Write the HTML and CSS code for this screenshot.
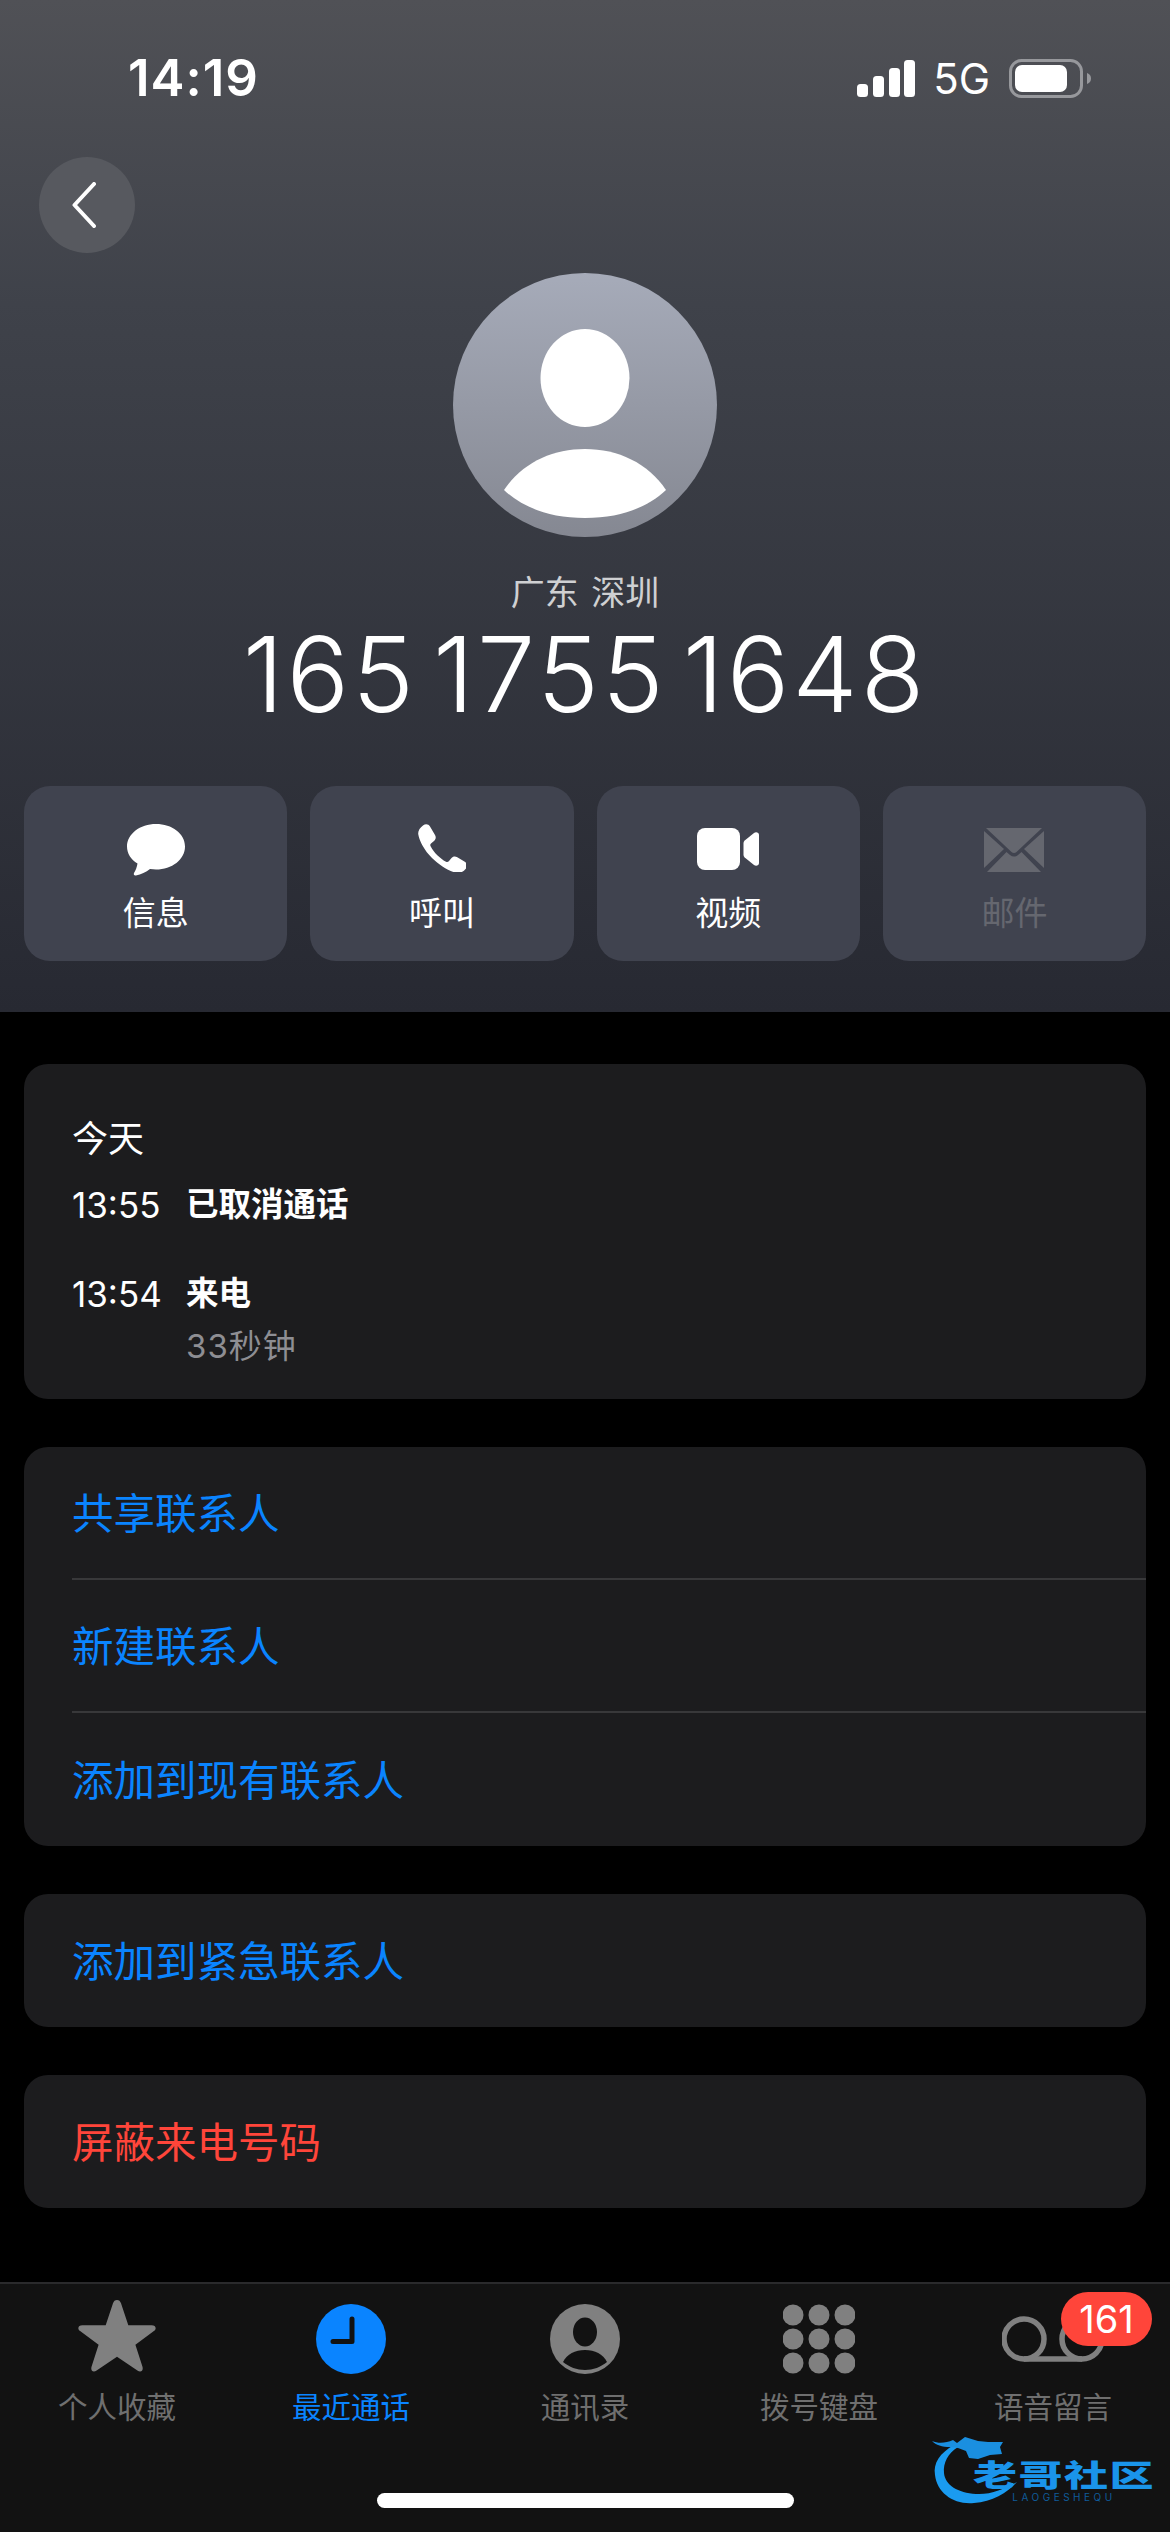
FILE: index.html
```html
<!DOCTYPE html>
<html lang="zh-CN">
<head>
    <meta charset="UTF-8">
    <meta name="viewport" content="width=device-width, initial-scale=1.0">
    <title>最近通话</title>
    <link rel="stylesheet" href="styles.css">
</head>
<body>

<div class="tela">

    <header class="topo">
        <div class="status">
            <span class="hora">14:19</span>
            <div class="status-dir">
                <svg class="sinal" width="58" height="37" viewBox="0 0 58 37" fill="#fff">
                    <rect x="0" y="24" width="11" height="13" rx="3.500"/>
                    <rect x="16" y="16" width="11" height="21" rx="3.500"/>
                    <rect x="32" y="8" width="11" height="29" rx="3.500"/>
                    <rect x="47" y="0" width="11" height="37" rx="3.500"/>
                </svg>
                <span class="rede">5G</span>
                <svg class="bateria" width="82" height="39" viewBox="0 0 82 39">
                    <rect x="1.500" y="1.500" width="71" height="36" rx="11" fill="none" stroke="#97989c" stroke-width="3"/>
                    <rect x="6" y="6" width="52" height="27" rx="7" fill="#fff"/>
                    <path d="M78 14c3 1 4 3 4 5.500s-1 4.500-4 5.500z" fill="#97989c"/>
                </svg>
            </div>
        </div>

        <button class="voltar">
            <svg width="24" height="46" viewBox="0 0 24 46"><path d="M22 2 2.500 23 22 44" fill="none" stroke="#fff" stroke-width="4" stroke-linecap="round" stroke-linejoin="round"/></svg>
        </button>

        <div class="avatar">
            <svg width="264" height="264" viewBox="0 0 264 264">
                <ellipse cx="132" cy="105" rx="44.500" ry="49" fill="#fff"/>
                <path d="M51 217C69 190 99 176 132 176s63 14 81 41c-18 17-45 28-81 28s-63-11-81-28z" fill="#fff"/>
            </svg>
        </div>

        <div class="local">广东 深圳</div>
        <div class="numero">165 1755 1648</div>

        <div class="acoes">
            <div class="acao">
                <svg class="ic-msg" width="58" height="52" viewBox="0 0 58 52"><path d="M29 0C13 0 0 10 0 22.500c0 7 4 13 10.500 17-.5 3.500-2 7-3.500 9.500-.7 1.500.3 3 2 2.500 5-1 10-3.500 14-6.500 2 .3 4 .5 6 .5 16 0 29-10 29-23S45 0 29 0z" fill="#fff"/></svg>
                <span>信息</span>
            </div>
            <div class="acao">
                <svg class="ic-fone" width="48" height="48" viewBox="0 0 48 48"><path d="M5 1.500C7.500-.5 10.500 0 12 2.500l5 8.500c1.300 2.300.8 4.500-1 6l-3 2.400c-.8.700-1 1.700-.4 2.800 1.800 3.300 4 6.300 6.700 9 2.700 2.600 5.500 4.800 8.700 6.500 1 .6 2 .4 2.800-.4l2.500-3c1.500-1.800 3.700-2.300 6-1l7.500 4.400c2.500 1.500 3 4.600 1 7-2.500 3-5.800 4.800-9.300 4.300C31 47 21.500 41.500 14 34 6.500 26.500 1.500 17.500.3 10.500-.3 7 1.800 4 5 1.500z" fill="#fff"/></svg>
                <span>呼叫</span>
            </div>
            <div class="acao">
                <svg class="ic-video" width="62" height="42" viewBox="0 0 62 42"><rect x="0" y="0" width="43" height="42" rx="8" fill="#fff"/><path d="M46.500 15c0-1 .4-1.800 1.200-2.500L57 5c2-1.500 5-.5 5 2v28c0 2.500-3 3.500-5 2l-9.300-7.500c-.8-.7-1.200-1.500-1.200-2.500z" fill="#fff"/></svg>
                <span>视频</span>
            </div>
            <div class="acao desativado">
                <svg class="ic-mail" width="60" height="44" viewBox="0 0 60 44" fill="#65676f">
                    <path d="M2 0h56L32.500 24c-1.500 1.300-3.500 1.300-5 0z"/>
                    <path d="M0 3v37l20-19z"/>
                    <path d="M60 3v37L40 21z"/>
                    <path d="M3 44h54L37.500 24l-3.500 3c-2.500 2-5.500 2-8 0l-3.500-3z"/>
                </svg>
                <span>邮件</span>
            </div>
        </div>
    </header>

    <main class="conteudo">
        <section class="card historico">
            <div class="dia">今天</div>
            <div class="chamada">
                <span class="chamada-hora">13:55</span>
                <div class="chamada-info"><b>已取消通话</b></div>
            </div>
            <div class="chamada">
                <span class="chamada-hora">13:54</span>
                <div class="chamada-info">
                    <b>来电</b>
                    <small>33秒钟</small>
                </div>
            </div>
        </section>

        <section class="card">
            <div class="linha">共享联系人</div>
            <div class="linha">新建联系人</div>
            <div class="linha">添加到现有联系人</div>
        </section>

        <section class="card">
            <div class="linha">添加到紧急联系人</div>
        </section>

        <section class="card">
            <div class="linha perigo">屏蔽来电号码</div>
        </section>
    </main>

    <nav class="abas">
        <div class="aba">
            <svg width="78" height="74" viewBox="0 0 78 74"><path d="M39 0c2 0 3.300 1.200 4 3.300l7.300 22h23.300c4.200 0 5.400 3.400 2.300 5.700L57.400 44.800l7 21.800c1.300 4-1.600 6.200-5 3.800L39 56.700 18.600 70.400c-3.400 2.400-6.300.2-5-3.800l7-21.800L2.100 31C-1 28.700.2 25.300 4.400 25.300h23.300l7.300-22C35.700 1.200 37 0 39 0z" fill="#808080"/></svg>
            <span>个人收藏</span>
        </div>
        <div class="aba ativa">
            <svg width="70" height="70" viewBox="0 0 70 70"><circle cx="35" cy="35" r="35" fill="#0a84ff"/><path d="M36 15v22.500H17" fill="none" stroke="#121212" stroke-width="5" stroke-linecap="round" stroke-linejoin="round"/></svg>
            <span>最近通话</span>
        </div>
        <div class="aba">
            <svg width="70" height="70" viewBox="0 0 70 70"><circle cx="35" cy="35" r="35" fill="#808080"/><ellipse cx="35" cy="28" rx="12" ry="14.500" fill="#121212"/><path d="M13 58c4-8 12-12 22-12s18 4 22 12c-6 5-14 8-22 8s-16-3-22-8z" fill="#121212"/></svg>
            <span>通讯录</span>
        </div>
        <div class="aba">
            <svg width="72" height="70" viewBox="0 0 72 70" fill="#808080">
                <circle cx="10" cy="11" r="10.500"/><circle cx="36" cy="11" r="10.500"/><circle cx="62" cy="11" r="10.500"/>
                <circle cx="10" cy="35" r="10.500"/><circle cx="36" cy="35" r="10.500"/><circle cx="62" cy="35" r="10.500"/>
                <circle cx="10" cy="59" r="10.500"/><circle cx="36" cy="59" r="10.500"/><circle cx="62" cy="59" r="10.500"/>
            </svg>
            <span>拨号键盘</span>
        </div>
        <div class="aba">
            <svg class="correio" width="102" height="46" viewBox="0 0 102 46"><path d="M22 43h58" fill="none" stroke="#808080" stroke-width="5.500"/><circle cx="22" cy="23" r="20" fill="none" stroke="#808080" stroke-width="5.500"/><circle cx="80" cy="23" r="20" fill="none" stroke="#808080" stroke-width="5.500"/></svg>
            <span>语音留言</span>
            <div class="badge">161</div>
        </div>
    </nav>

    <div class="marca">
        <svg class="marca-dragao" width="90" height="70" viewBox="0 0 90 70">
            <path d="M22 10C8 18 1 28 3 40c2 18 19 30 39 28 18-1 33-10 43-21-13 7-27 13-41 12C26 58 13 50 12 38c-1-10 4-20 14-26z" fill="#1a9bf0"/>
            <path d="M0 6c7 3 14 2 21-1l4 3 8-6 13 4 10 1h15l-3 5 2 7-12 1-12 4-9-1-3-7-8-3-8-1C10 12 4 10 0 6z" fill="#1a8fe0"/>
        </svg>
        <div class="marca-texto">
            <strong>老哥社区</strong>
            <small>LAOGESHEQU</small>
        </div>
    </div>

    <div class="home"></div>
</div>

</body>
</html>
```
FILE: styles.css
```css
* {
    box-sizing: border-box;
}
body {
    margin: 0;
    background-color: #000;
    color: #fff;
    font-family: Inter, "Noto Sans CJK SC", sans-serif;
}
.tela {
    position: relative;
    width: 1170px;
    height: 2532px;
    overflow: hidden;
    display: flex;
    flex-direction: column;
}
.topo {
    height: 1012px;
    padding: 0 24px;
    display: flex;
    flex-direction: column;
    background: linear-gradient(180deg, #505156 0%, #3f424a 30%, #272932 100%);
}
.status {
    height: 157px;
    display: flex;
    justify-content: space-between;
    align-items: flex-start;
    padding: 50px 55px 0 104px;
}
.hora {
    font-size: 51px;
    font-weight: 600;
    line-height: 56px;
    letter-spacing: 1px;
}
.status-dir {
    display: flex;
    align-items: center;
    padding-top: 9px;
}
.rede {
    font-size: 42px;
    line-height: 37px;
    margin: 0 19px 0 18px;
}
.voltar {
    width: 96px;
    height: 96px;
    margin-left: 15px;
    padding: 0 6px 0 0;
    border: none;
    border-radius: 50%;
    background-color: #57595f;
    display: flex;
    align-items: center;
    justify-content: center;
}
.avatar {
    width: 264px;
    height: 264px;
    margin: 20px auto 0;
    border-radius: 50%;
    background: linear-gradient(180deg, #a6abb9 0%, #858892 100%);
}
.local {
    margin-top: 34px;
    text-align: center;
    font-size: 34px;
    line-height: 44px;
    word-spacing: 3px;
    color: #cfd0d2;
}
.numero {
    margin-top: -3px;
    text-align: center;
    font-size: 104px;
    font-weight: 300;
    line-height: 124px;
    letter-spacing: 3px;
    word-spacing: -16px;
}
.acoes {
    margin-top: 50px;
    display: grid;
    grid-template-columns: repeat(4, 1fr);
    gap: 23px;
}
.acao {
    height: 175px;
    border-radius: 26px;
    background-color: #40434f;
    display: flex;
    flex-direction: column;
    align-items: center;
    justify-content: flex-end;
    padding-bottom: 28px;
    font-size: 33px;
    line-height: 40px;
}
.ic-msg {
    margin-bottom: 17px;
}
.ic-fone, .ic-mail {
    margin-bottom: 21px;
}
.ic-video {
    margin-bottom: 23px;
}
.desativado {
    color: #65676f;
}
.conteudo {
    padding: 52px 24px 0;
    display: flex;
    flex-direction: column;
    gap: 48px;
}
.card {
    background-color: #1c1c1e;
    border-radius: 24px;
    overflow: hidden;
}
.historico {
    height: 335px;
    padding: 52px 48px 0;
}
.dia {
    font-size: 36px;
    line-height: 46px;
}
.chamada {
    display: flex;
    margin-top: 21px;
    height: 69px;
}
.chamada + .chamada {
    margin-top: 20px;
}
.chamada-hora {
    width: 114px;
    font-size: 35px;
    line-height: 44px;
}
.chamada-info b {
    display: block;
    font-size: 32.500px;
    font-weight: 600;
    line-height: 44px;
}
.chamada-info small {
    display: block;
    margin-top: 8px;
    font-size: 33px;
    line-height: 44px;
    letter-spacing: 1px;
    color: #8e8e93;
}
.linha {
    height: 133px;
    margin-left: 48px;
    padding-bottom: 3px;
    display: flex;
    align-items: center;
    font-size: 41.500px;
    color: #0a84ff;
    border-bottom: 2px solid #38383a;
}
.linha:last-child {
    border-bottom: none;
}
.perigo {
    color: #ff453a;
}
.abas {
    position: absolute;
    left: 0;
    right: 0;
    bottom: 0;
    height: 250px;
    padding-top: 20px;
    border-top: 2px solid #2a2a2c;
    background-color: #121212;
    display: grid;
    grid-template-columns: repeat(5, 1fr);
}
.aba {
    position: relative;
    height: 122px;
    display: flex;
    flex-direction: column;
    align-items: center;
    justify-content: flex-end;
    font-size: 29.500px;
    line-height: 38px;
    color: #6f6f6f;
}
.aba svg {
    position: absolute;
    bottom: 52px;
}
.aba .correio {
    bottom: 64px;
}
.ativa {
    color: #0a84ff;
}
.badge {
    position: absolute;
    top: -12px;
    right: 18px;
    width: 91px;
    height: 54px;
    border-radius: 27px;
    background-color: #ff453a;
    color: #fff;
    font-size: 38px;
    line-height: 54px;
    text-align: center;
}
.marca {
    position: absolute;
    left: 932px;
    top: 2435px;
    width: 224px;
    height: 70px;
}
.marca-dragao {
    position: absolute;
    left: 0;
    top: 0;
}
.marca-texto {
    position: absolute;
    left: 40px;
    top: 25px;
    width: 184px;
    text-align: center;
    white-space: nowrap;
    color: #1a94ea;
}
.marca-texto strong {
    display: block;
    height: 30px;
    font-size: 44px;
    font-weight: 900;
    line-height: 30px;
    letter-spacing: 1.500px;
    transform: scaleY(.68);
}
.marca-texto small {
    display: block;
    margin-top: 2px;
    font-size: 10px;
    line-height: 10px;
    letter-spacing: 3.500px;
    color: #0f5c9a;
}
.home {
    position: absolute;
    left: 377px;
    top: 2493px;
    width: 417px;
    height: 15px;
    border-radius: 8px;
    background-color: #fff;
}
```
